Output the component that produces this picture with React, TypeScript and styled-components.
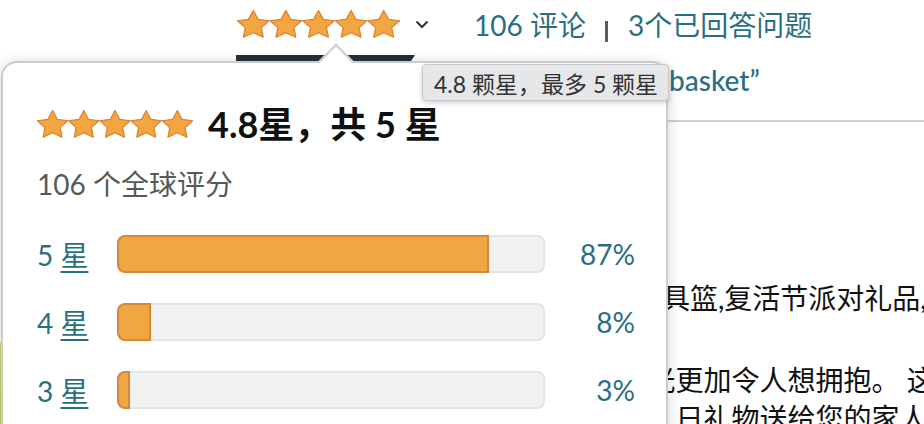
import React from 'react';
import styled, {createGlobalStyle} from 'styled-components';

const GlobalStyle = createGlobalStyle`
  html, body {
    margin: 0;
    padding: 0;
    background: #fff;
  }
  body {
    font-family: Lato, "Noto Sans CJK SC", sans-serif;
    color: #0f1111;
    overflow: hidden;
  }
`;

const teal = '#2a6f81';

const Page = styled.div`
  position: relative;
  width: 924px;
  height: 424px;
  overflow: hidden;
`;

const Header = styled.div`
  display: flex;
  align-items: flex-start;
  height: 62px;
  padding-left: 236px;
`;

const Trigger = styled.div`
  width: 179px;
  height: 61px;
  display: flex;
  flex-direction: column;
  justify-content: space-between;
  padding: 10px 0 0 1px;
  box-sizing: border-box;
`;

const ActiveBar = styled.div`
  height: 6px;
  margin-left: -1px;
  background: #232f3e;
  clip-path: polygon(0 0, 100% 0, calc(100% - 4px) 100%, 0 100%);
`;

const Chevron = styled.svg`
  margin-top: 20px;
  flex: none;
`;

const LinkRow = styled.div`
  display: flex;
  align-items: center;
  margin-left: 45px;
  margin-top: 8px;
  font-size: 28px;
  line-height: 34px;
`;

const TopLink = styled.a`
  color: ${teal};
  text-decoration: none;
  white-space: nowrap;
`;

const Divider = styled.span`
  align-self: flex-start;
  width: 3px;
  height: 21px;
  background: #5a5e5e;
  margin: 13px 20px 0 19px;
`;

const Content = styled.div`
  display: flex;
`;

const Gallery = styled.div`
  width: 438px;
  flex: none;
  padding-top: 280px;
  box-sizing: border-box;
`;

const Thumb = styled.div`
  width: 120px;
  height: 120px;
  background: linear-gradient(180deg, #c9e36a, #b5d44a);
`;

const Details = styled.div`
  flex: 1;
  min-width: 0;
`;

const ProductTitle = styled.div`
  font-size: 28px;
  line-height: 36px;
  font-weight: 500;
  color: ${teal};
  white-space: nowrap;
`;

const Rule = styled.div`
  margin-top: 22px;
  height: 2px;
  background: #cdd1d1;
`;

const Bullets = styled.ul`
  list-style: none;
  margin: 157px 0 0;
  padding: 0;
`;

const Bullet = styled.li`
  font-size: 28px;
  line-height: 38px;
  & + & {
    margin-top: 44px;
  }
`;

const Line = styled.span`
  display: block;
  white-space: nowrap;
`;

const Popover = styled.div`
  position: absolute;
  left: 1px;
  top: 61px;
  width: 667px;
  height: 400px;
  box-sizing: border-box;
  background: #fff;
  border: 2px solid #c9cdcd;
  border-radius: 16px 16px 0 0;
  box-shadow: 0 2px 14px rgba(15, 17, 17, 0.18);
  padding: 39px 31px 0 34px;
  z-index: 2;
`;

const Arrow = styled.div`
  position: absolute;
  left: 320px;
  top: -14px;
  width: 24px;
  height: 24px;
  background: #fff;
  border-top: 2px solid #c9cdcd;
  border-left: 2px solid #c9cdcd;
  transform: rotate(45deg);
`;

const Summary = styled.div`
  display: flex;
  align-items: center;
  gap: 15px;
  height: 44px;
`;

const Score = styled.h2`
  margin: 0;
  font-size: 36px;
  line-height: 44px;
  font-weight: 700;
  color: #0f1111;
  white-space: nowrap;
`;

const Total = styled.div`
  margin-top: 18px;
  font-size: 28px;
  line-height: 40px;
  color: #565959;
`;

const Histogram = styled.div`
  margin-top: 16px;
`;

const Row = styled.div`
  display: grid;
  grid-template-columns: 80px 428px 1fr;
  align-items: center;
  height: 68px;
  font-size: 28px;
  color: ${teal};
`;

const Label = styled.span`
  white-space: nowrap;
  > u {
    text-decoration-thickness: 1.5px;
    text-underline-offset: 5px;
  }
`;

const Track = styled.div`
  position: relative;
  height: 38px;
  border-radius: 8px;
  background: #f0f2f2;
  box-shadow: inset 0 0 0 2px #e3e6e6;
  overflow: hidden;
`;

const Fill = styled.div`
  height: 100%;
  background: #f0a742;
  border-radius: 8px 0 0 8px;
  box-shadow: inset 0 0 0 2px #d8873a;
`;

const Percent = styled.span`
  text-align: right;
`;

const Tooltip = styled.div`
  position: absolute;
  left: 422px;
  top: 64px;
  height: 37px;
  padding: 0 10px 0 11px;
  box-sizing: border-box;
  display: flex;
  align-items: center;
  background: #e6e7e8;
  border: 1px solid #c4c6c8;
  border-radius: 4px;
  box-shadow: 0 2px 5px rgba(0, 0, 0, 0.18);
  font-size: 23px;
  color: #333;
  white-space: nowrap;
  z-index: 3;
`;

function Stars({w, h}: {w: number; h: number}) {
  return (
    <svg width={w * 5} height={h} viewBox="0 0 104 20.4" preserveAspectRatio="none"
         style={{flex: 'none', display: 'block'}}>
      {[0, 1, 2, 3, 4].map(i => (
        <polygon
          key={i}
          transform={`translate(${i * 20.8 - 1.6} -1.2)`}
          points="12,1.6 15.1,8 22.2,9 17.1,14 18.3,21 12,17.7 5.7,21 6.9,14 1.8,9 8.9,8"
          fill="#f3a540"
          stroke="#d9822e"
          strokeWidth="0.8"
          strokeLinejoin="round"
        />
      ))}
    </svg>
  );
}

const rows = [
  {stars: 5, pct: 87},
  {stars: 4, pct: 8},
  {stars: 3, pct: 3},
];

export default function App() {
  return (
    <Page>
      <GlobalStyle/>
      <Header>
        <Trigger>
          <Stars w={32.6} h={28}/>
          <ActiveBar/>
        </Trigger>
        <Chevron width="14" height="9" viewBox="0 0 14 9">
          <path d="M1.5 1.5 L7 7 L12.5 1.5" fill="none" stroke="#333" strokeWidth="2"/>
        </Chevron>
        <LinkRow>
          <TopLink>106 评论</TopLink>
          <Divider/>
          <TopLink>3个已回答问题</TopLink>
        </LinkRow>
      </Header>
      <Content>
        <Gallery>
          <Thumb/>
        </Gallery>
        <Details>
          <ProductTitle>复活节毛绒玩具兔 basket”</ProductTitle>
          <Rule/>
          <Bullets>
            <Bullet>
              <Line>适合作为复活节玩具篮,复活节派对礼品,生日礼物,送给孩子们</Line>
            </Bullet>
            <Bullet>
              <Line>兔子柔软, 沐浴阳光更加令人想拥抱。 这只可爱的兔子</Line>
              <Line>作为复活节礼物和, 日礼物送给您的家人和朋友</Line>
            </Bullet>
          </Bullets>
        </Details>
      </Content>
      <Popover>
        <Arrow/>
        <Summary>
          <Stars w={31.2} h={28}/>
          <Score>4.8星，共 5 星</Score>
        </Summary>
        <Total>106 个全球评分</Total>
        <Histogram>
          {rows.map(r => (
            <Row key={r.stars}>
              <Label>{r.stars} <u>星</u></Label>
              <Track>
                <Fill style={{width: `${r.pct}%`}}/>
              </Track>
              <Percent>{r.pct}%</Percent>
            </Row>
          ))}
        </Histogram>
      </Popover>
      <Tooltip>4.8 颗星，最多 5 颗星</Tooltip>
    </Page>
  );
}
